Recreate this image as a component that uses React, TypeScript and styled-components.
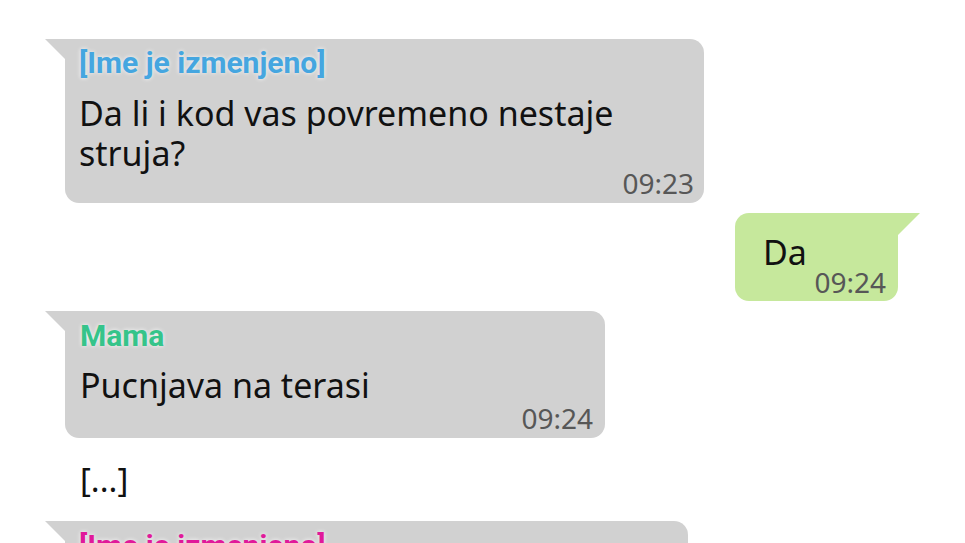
import React from 'react';
import styled, { createGlobalStyle, css } from 'styled-components';

const Global = createGlobalStyle`
  html, body {
    margin: 0;
    padding: 0;
    background: #fff;
  }
  body {
    font-family: "Noto Sans", "DejaVu Sans", sans-serif;
    color: #111;
  }
`;

const Thread = styled.div`
  display: flex;
  flex-direction: column;
  gap: 10px;
  padding: 39px 0 0 0;
  width: 965px;
  height: 543px;
  overflow: hidden;
  box-sizing: border-box;
`;

const Row = styled.div<{ $out?: boolean }>`
  flex-shrink: 0;
  display: flex;
  justify-content: ${(p) => (p.$out ? 'flex-end' : 'flex-start')};
  padding: ${(p) => (p.$out ? '0 67px 0 0' : '0 0 0 65px')};
`;

const Bubble = styled.div<{ $out?: boolean; $w: number; $pad: string }>`
  position: relative;
  box-sizing: border-box;
  width: ${(p) => p.$w}px;
  padding: ${(p) => p.$pad};
  background: ${(p) => (p.$out ? '#c6e89c' : '#d1d1d1')};
  border-radius: 14px;
  display: flex;
  flex-direction: column;

  ${(p) =>
    p.$out
      ? css`
          border-top-right-radius: 0;
          &::before {
            content: '';
            position: absolute;
            top: 0;
            right: -22px;
            border-top: 22px solid #c6e89c;
            border-right: 22px solid transparent;
          }
        `
      : css`
          border-top-left-radius: 0;
          &::before {
            content: '';
            position: absolute;
            top: 0;
            left: -20px;
            border-top: 20px solid #d1d1d1;
            border-left: 20px solid transparent;
          }
        `}
`;

const Sender = styled.div<{ $color: string }>`
  font-family: "Roboto", "Noto Sans", sans-serif;
  font-weight: 700;
  font-size: 30px;
  line-height: 34px;
  color: ${(p) => p.$color};
  text-shadow: 0 0 4px rgba(255, 255, 255, 0.9);
`;

const Text = styled.div<{ $gap?: number }>`
  font-size: 34px;
  line-height: 40px;
  margin-top: ${(p) => p.$gap ?? 0}px;
`;

const Time = styled.div<{ $shift?: number }>`
  align-self: flex-end;
  font-size: 28px;
  line-height: 30px;
  color: #575757;
  margin-top: ${(p) => p.$shift ?? 0}px;
`;

const Gap = styled.div`
  flex-shrink: 0;
  font-size: 33px;
  line-height: 40px;
  padding: 12px 0 0 80px;
  height: 63px;
  box-sizing: border-box;
`;

export default function App() {
  return (
    <>
      <Global />
      <Thread>
        <Row>
          <Bubble $w={639} $pad="7px 10px 5px 14px">
            <Sender $color="#45a6e0">[Ime je izmenjeno]</Sender>
            <Text $gap={13}>Da li i kod vas povremeno nestaje<br />struja?</Text>
            <Time $shift={-5}>09:23</Time>
          </Bubble>
        </Row>
        <Row $out>
          <Bubble $out $w={163} $pad="19px 12px 4px 28px">
            <Text>Da</Text>
            <Time $shift={-5}>09:24</Time>
          </Bubble>
        </Row>
        <Row>
          <Bubble $w={540} $pad="8px 12px 5px 15px">
            <Sender $color="#35c48a">Mama</Sender>
            <Text $gap={12}>Pucnjava na terasi</Text>
            <Time $shift={-2}>09:24</Time>
          </Bubble>
        </Row>
        <Gap>[...]</Gap>
        <Row>
          <Bubble $w={623} $pad="8px 12px 5px 14px">
            <Sender $color="#e0199a">[Ime je izmenjeno]</Sender>
            <Text $gap={12}>&nbsp;</Text>
          </Bubble>
        </Row>
      </Thread>
    </>
  );
}
